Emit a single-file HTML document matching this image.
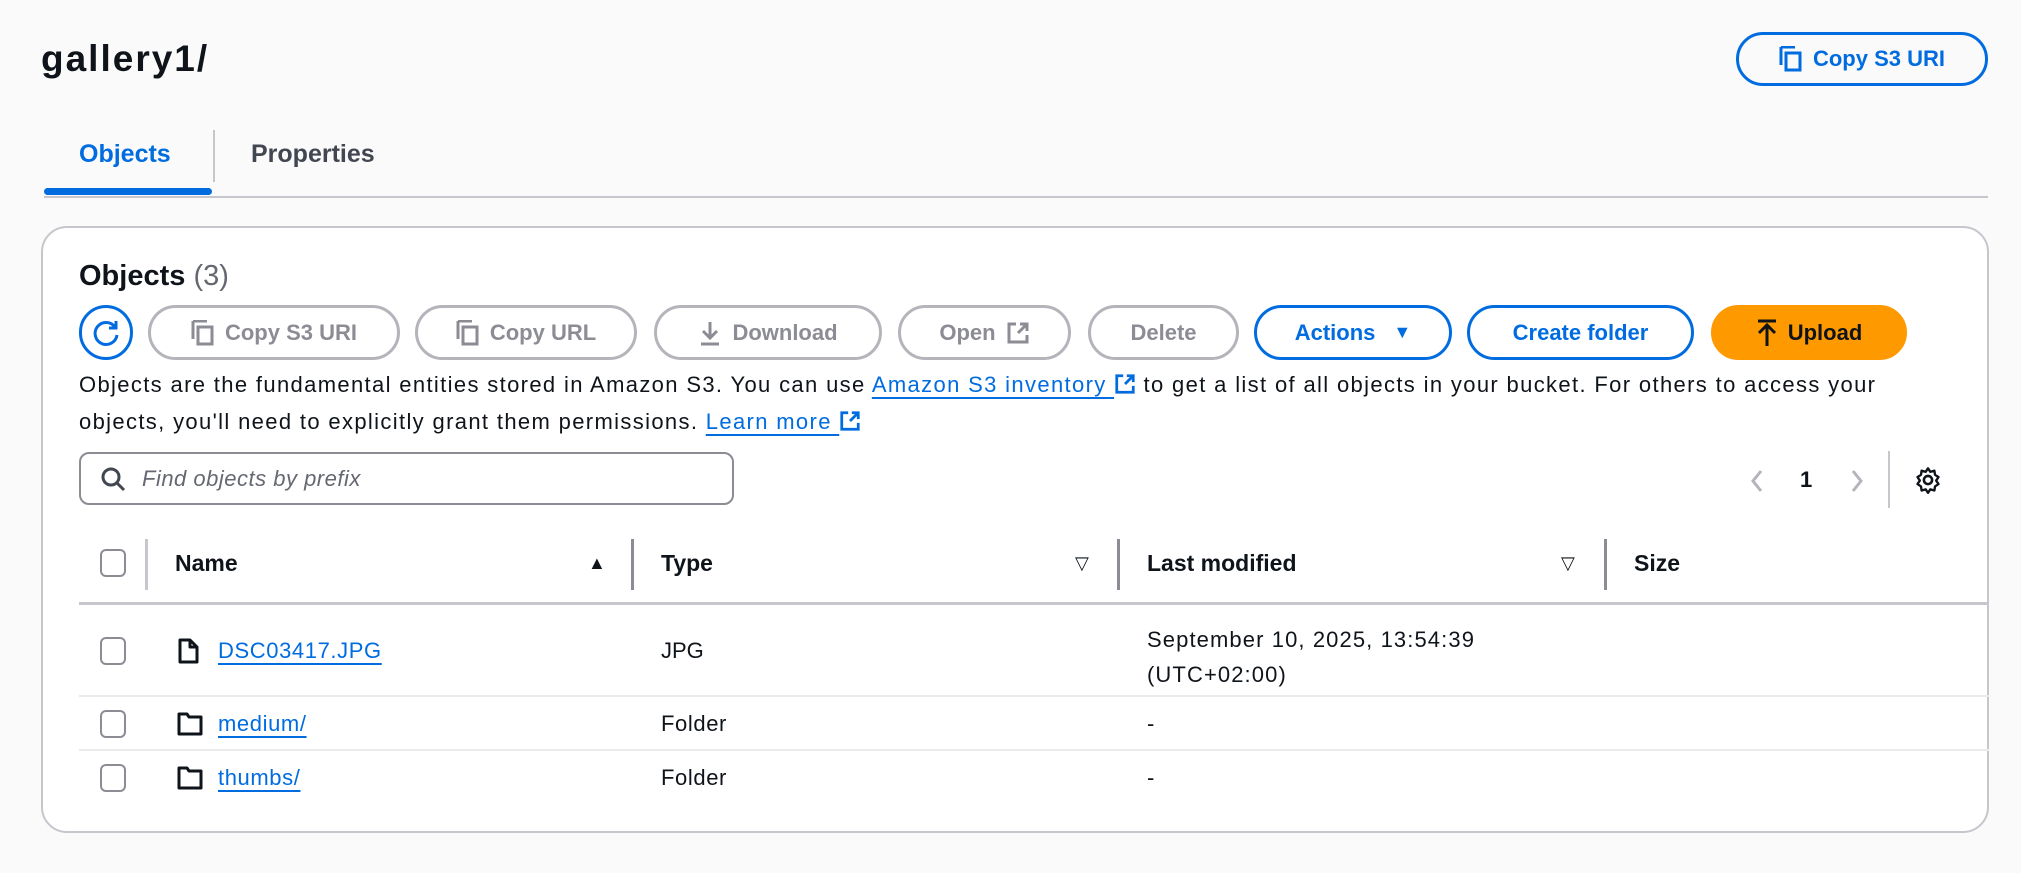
<!DOCTYPE html>
<html><head><meta charset="utf-8"><style>
*{box-sizing:border-box;margin:0;padding:0}
body{width:2021px;height:873px;background:#fafafa;font-family:"Liberation Sans",sans-serif;color:#0f141a;position:relative;overflow:hidden}
.a{position:absolute}
.btn{position:absolute;top:305px;height:55px;border-radius:28px;border:3px solid #b4b4bb;color:#8c8c94;font-weight:bold;font-size:22px;display:flex;align-items:center;justify-content:center;gap:10px;background:#fff}
.bl{border-color:#006ce0;color:#006ce0}
.sep{position:absolute;width:3px;background:#b4b4bb}
.cb{position:absolute;width:26px;height:28px;border:2px solid #8c8c94;border-radius:6px;background:#fff}
a,.lk{color:#006ce0;text-decoration:underline;text-underline-offset:5px}
.hd{position:absolute;top:550px;font-weight:bold;font-size:23px;color:#0f141a}
.t{position:absolute;font-size:22px}
.hl{position:absolute;left:79px;right:32px;height:2px;background:#e9ebed}
</style></head><body>
<div class="a" style="left:41px;top:38px;font-size:37px;font-weight:bold;letter-spacing:2px">gallery1/</div>
<div class="btn bl" style="left:1736px;top:32px;width:252px;height:54px;background:transparent">
<svg width="24" height="26" viewBox="0 0 24 26"><path d="M2 1v18M2 1h14" stroke="#006ce0" stroke-width="3" fill="none"/><rect x="7" y="7" width="14" height="17" stroke="#006ce0" stroke-width="3" fill="none"/></svg>Copy S3 URI</div>
<div class="a" style="left:79px;top:140px;font-size:25px;font-weight:bold;color:#006ce0">Objects</div>
<div class="a" style="left:251px;top:140px;font-size:25px;font-weight:bold;color:#424650">Properties</div>
<div class="a" style="left:213px;top:130px;width:2px;height:52px;background:#c6c6cd"></div>
<div class="a" style="left:44px;top:196px;width:1944px;height:2px;background:#c6c6cd"></div>
<div class="a" style="left:44px;top:188px;width:168px;height:7px;border-radius:4px;background:#006ce0"></div>

<div class="a" style="left:41px;top:226px;width:1948px;height:607px;border:2px solid #c6c6cd;border-radius:26px;background:#fff"></div>
<div class="a" style="left:79px;top:260px;font-size:29px;font-weight:bold">Objects <span style="font-weight:normal;color:#656871">(3)</span></div>

<div class="btn bl" style="left:79px;width:54px;padding:0">
<svg width="30" height="30" viewBox="0 0 30 30"><path d="M24 9A11 11 0 1 0 26 17" stroke="#006ce0" stroke-width="3" fill="none"/><path d="M25 3v7h-7" stroke="#006ce0" stroke-width="3" fill="none"/></svg></div>
<div class="btn" style="left:148px;width:252px"><svg width="24" height="26" viewBox="0 0 24 26"><path d="M2 1v18M2 1h14" stroke="#8c8c94" stroke-width="3" fill="none"/><rect x="7" y="7" width="14" height="17" stroke="#8c8c94" stroke-width="3" fill="none"/></svg>Copy S3 URI</div>
<div class="btn" style="left:415px;width:222px"><svg width="24" height="26" viewBox="0 0 24 26"><path d="M2 1v18M2 1h14" stroke="#8c8c94" stroke-width="3" fill="none"/><rect x="7" y="7" width="14" height="17" stroke="#8c8c94" stroke-width="3" fill="none"/></svg>Copy URL</div>
<div class="btn" style="left:654px;width:228px"><svg width="24" height="26" viewBox="0 0 24 26"><path d="M12 2v16M5 11l7 7 7-7M3 24h18" stroke="#8c8c94" stroke-width="3" fill="none"/></svg>Download</div>
<div class="btn" style="left:898px;width:173px">Open<svg width="24" height="24" viewBox="0 0 24 24"><path d="M10 3H3v18h18v-7M14 3h7v7M21 3l-9 9" stroke="#8c8c94" stroke-width="3" fill="none"/></svg></div>
<div class="btn" style="left:1088px;width:151px">Delete</div>
<div class="btn bl" style="left:1254px;width:198px">Actions <span style="font-size:18px;margin-left:8px">▼</span></div>
<div class="btn bl" style="left:1467px;width:227px">Create folder</div>
<div class="btn" style="left:1711px;width:196px;border-color:#ff9900;background:#ff9900;color:#0f141a"><svg width="22" height="28" viewBox="0 0 22 28"><path d="M2 2h18M11 27V7M3 14l8-8 8 8" stroke="#0f141a" stroke-width="3" fill="none"/></svg>Upload</div>

<div class="a" style="left:79px;top:366px;font-size:22px;line-height:37px;color:#0f141a;white-space:nowrap;letter-spacing:1.35px">Objects are the fundamental entities stored in Amazon S3. You can use <span class="lk">Amazon S3 inventory </span><svg width="22" height="22" viewBox="0 0 24 24" style="vertical-align:-3px"><path d="M10 3H3v18h18v-7M14 3h7v7M21 3l-9 9" stroke="#006ce0" stroke-width="3" fill="none"/></svg> to get a list of all objects in your bucket. For others to access your<br>objects, you'll need to explicitly grant them permissions. <span class="lk">Learn more </span><svg width="22" height="22" viewBox="0 0 24 24" style="vertical-align:-3px"><path d="M10 3H3v18h18v-7M14 3h7v7M21 3l-9 9" stroke="#006ce0" stroke-width="3" fill="none"/></svg></div>

<div class="a" style="left:79px;top:452px;width:655px;height:53px;border:2px solid #8c8c94;border-radius:10px;background:#fff"></div>
<svg class="a" style="left:100px;top:466px" width="26" height="26" viewBox="0 0 26 26"><circle cx="11" cy="11" r="8" stroke="#424650" stroke-width="3" fill="none"/><path d="M17 17l7 7" stroke="#424650" stroke-width="3"/></svg>
<div class="a" style="left:142px;top:466px;font-size:22px;font-style:italic;color:#656871;letter-spacing:0.5px">Find objects by prefix</div>

<svg class="a" style="left:1749px;top:468px" width="16" height="26" viewBox="0 0 16 26"><path d="M12 3L4 13l8 10" stroke="#b4b4bb" stroke-width="3" fill="none"/></svg>
<div class="a" style="left:1800px;top:467px;font-size:22px;font-weight:bold">1</div>
<svg class="a" style="left:1849px;top:468px" width="16" height="26" viewBox="0 0 16 26"><path d="M4 3l8 10-8 10" stroke="#b4b4bb" stroke-width="3" fill="none"/></svg>
<div class="a" style="left:1888px;top:451px;width:2px;height:57px;background:#c6c6cd"></div>
<svg class="a" style="left:1914px;top:466px" width="28" height="28" viewBox="0 0 24 24"><circle cx="12" cy="12" r="3.5" stroke="#0f141a" stroke-width="2.2" fill="none"/><path d="M12 2l2 3 3.5-1 .5 3.5 3 2-2 3 2 3-3 2-.5 3.5-3.5-1-2 3-2-3-3.5 1-.5-3.5-3-2 2-3-2-3 3-2 .5-3.5 3.5 1z" stroke="#0f141a" stroke-width="2" fill="none" stroke-linejoin="round"/></svg>

<div class="cb" style="left:100px;top:549px"></div>
<div class="sep" style="left:145px;top:539px;height:51px;background:#c6c6cd"></div>
<div class="hd" style="left:175px">Name</div>
<div class="a" style="left:588px;top:553px;font-size:18px">▲</div>
<div class="sep" style="left:631px;top:539px;height:51px;background:#8c8c94"></div>
<div class="hd" style="left:661px">Type</div>
<div class="a" style="left:1075px;top:553px;font-size:18px">▽</div>
<div class="sep" style="left:1117px;top:539px;height:51px;background:#8c8c94"></div>
<div class="hd" style="left:1147px">Last modified</div>
<div class="a" style="left:1561px;top:553px;font-size:18px">▽</div>
<div class="sep" style="left:1604px;top:539px;height:51px;background:#8c8c94"></div>
<div class="hd" style="left:1634px">Size</div>
<div class="a" style="left:79px;top:602px;width:1910px;height:3px;background:#c6c6cd"></div>

<div class="cb" style="left:100px;top:637px"></div>
<svg class="a" style="left:178px;top:638px" width="22" height="26" viewBox="0 0 22 26"><path d="M2 2h10l7 7v15H2z M12 2v7h7" stroke="#0f141a" stroke-width="3" fill="none" stroke-linejoin="round"/></svg>
<div class="t" style="left:218px;top:638px;letter-spacing:0.6px"><span class="lk">DSC03417.JPG</span></div>
<div class="t" style="left:661px;top:638px">JPG</div>
<div class="t" style="left:1147px;top:622px;line-height:35px;letter-spacing:1.1px">September 10, 2025, 13:54:39<br>(UTC+02:00)</div>
<div class="hl" style="top:695px"></div>

<div class="cb" style="left:100px;top:710px"></div>
<svg class="a" style="left:177px;top:712px" width="26" height="24" viewBox="0 0 26 24"><path d="M2 2h8l2 3h12v17H2z" stroke="#0f141a" stroke-width="3" fill="none" stroke-linejoin="round"/></svg>
<div class="t" style="left:218px;top:711px;letter-spacing:0.6px"><span class="lk">medium/</span></div>
<div class="t" style="left:661px;top:711px;letter-spacing:0.6px">Folder</div>
<div class="t" style="left:1147px;top:711px">-</div>
<div class="hl" style="top:749px"></div>

<div class="cb" style="left:100px;top:764px"></div>
<svg class="a" style="left:177px;top:766px" width="26" height="24" viewBox="0 0 26 24"><path d="M2 2h8l2 3h12v17H2z" stroke="#0f141a" stroke-width="3" fill="none" stroke-linejoin="round"/></svg>
<div class="t" style="left:218px;top:765px;letter-spacing:0.6px"><span class="lk">thumbs/</span></div>
<div class="t" style="left:661px;top:765px;letter-spacing:0.6px">Folder</div>
<div class="t" style="left:1147px;top:765px">-</div>
</body></html>
